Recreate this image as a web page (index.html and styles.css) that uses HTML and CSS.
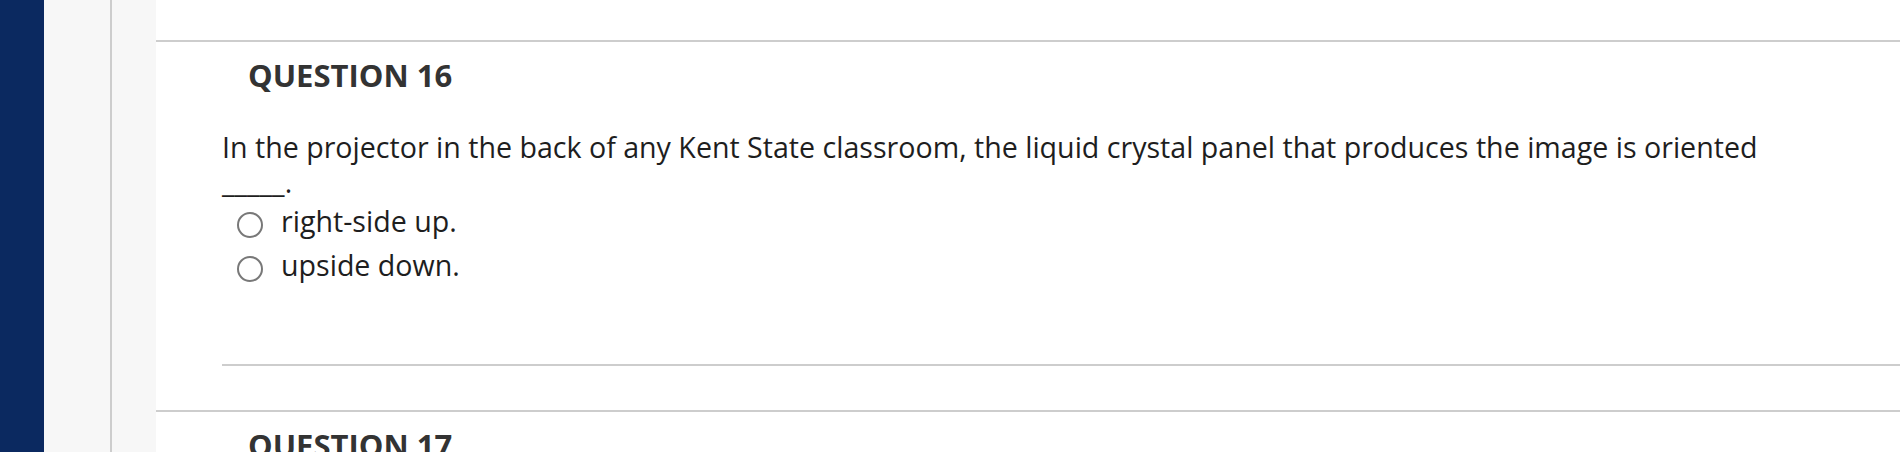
FILE: index.html
```html
<!DOCTYPE html>
<html lang="en">
<head>
<meta charset="utf-8">
<title>Question 16</title>
<link rel="stylesheet" href="styles.css">
</head>
<body>
<div class="layout">
  <nav class="nav-rail"></nav>
  <aside class="side-panel"><div class="side-inner"></div></aside>
  <main class="content">
    <div class="top-space"></div>
    <section class="question">
      <h2 class="q-title">QUESTION 16</h2>
      <div class="q-body">
        <p class="q-text">In the projector in the back of any Kent State classroom, the liquid crystal panel that produces the image is oriented <span class="blank">_____</span>.</p>
        <ul class="choices">
          <li class="choice"><span class="radio"></span><span class="choice-label">right-side up.</span></li>
          <li class="choice"><span class="radio"></span><span class="choice-label">upside down.</span></li>
        </ul>
        <div class="q-divider"></div>
      </div>
    </section>
    <section class="question next">
      <h2 class="q-title">QUESTION 17</h2>
    </section>
  </main>
</div>
</body>
</html>
```
FILE: styles.css
```css
* { box-sizing: border-box; }
html, body {
  margin: 0;
  padding: 0;
  height: 100%;
  overflow: hidden;
  background: #ffffff;
}
body {
  font-family: "Open Sans", "Noto Sans", sans-serif;
  color: #222222;
}
.layout {
  display: flex;
  height: 452px;
}
.nav-rail {
  width: 44px;
  flex: 0 0 44px;
  background: #0b2960;
}
.side-panel {
  width: 112px;
  flex: 0 0 112px;
  background: #f7f7f7;
}
.side-inner {
  width: 68px;
  height: 100%;
  border-right: 2px solid #cdcdcd;
}
.content {
  flex: 1;
  background: #ffffff;
  min-width: 0;
}
.top-space {
  height: 40px;
}
.question {
  border-top: 2px solid #cdcdcd;
  padding-top: 12px;
}
.q-title {
  margin: 0 0 0 92px;
  font-size: 31px;
  line-height: 42px;
  font-weight: 700;
  color: #333333;
}
.q-body {
  margin-left: 66px;
  padding-top: 33px;
}
.q-text {
  margin: 0;
  padding-right: 80px;
  font-size: 28.6px;
  line-height: 35px;
  color: #1e1e1e;
}
.choices {
  list-style: none;
  margin: 0;
  padding: 0 0 0 15px;
}
.choice {
  display: flex;
  align-items: flex-start;
  font-size: 28.6px;
  line-height: 44px;
  color: #1e1e1e;
}
.radio {
  width: 26px;
  height: 26px;
  flex: 0 0 26px;
  margin-top: 13px;
  border: 2px solid #787878;
  border-radius: 50%;
  background: #ffffff;
}
.choice-label {
  margin-left: 18px;
}
.q-divider {
  margin-top: 77px;
  height: 2px;
  background: #cdcdcd;
}
.question.next {
  margin-top: 44px;
}
```
